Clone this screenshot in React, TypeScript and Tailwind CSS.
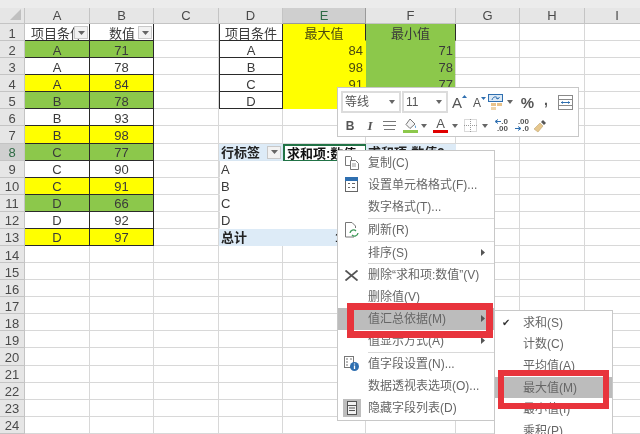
const BLACK = "border-[#2a2a2a]";
const colHeads = ["", "A", "B", "C", "D", "E", "F", "G", "H", "I"];
const source: [string, string, string][] = [
  ["A", "71", "g"], ["A", "78", "w"], ["A", "84", "y"], ["B", "78", "g"], ["B", "93", "w"], ["B", "98", "y"],
  ["C", "77", "g"], ["C", "90", "w"], ["C", "91", "y"], ["D", "66", "g"], ["D", "92", "w"], ["D", "97", "y"],
];

function FilterBtn() {
  return (
    <span className="absolute right-[1px] top-[2px] flex h-[13px] w-[14px] items-center justify-center border border-[#c8c8c8] bg-[#f2f2f2]">
      <svg width="7" height="4" viewBox="0 0 7 4"><path d="M0 0h7L3.5 4z" fill="#666" /></svg>
    </span>
  );
}

function Cell({ cls = "", children }: { cls?: string; children?: React.ReactNode }) {
  return (
    <div className={`relative flex items-center overflow-hidden whitespace-nowrap border-r border-b pt-[2px] text-[13px] leading-none text-[#3a3a3a] ${cls}`}>
      {children}
    </div>
  );
}

const fill = (k: string) => (k === "g" ? "bg-[#8cc84b]" : k === "y" ? "bg-[#ffff00]" : "bg-white");

function Row({ n }: { n: number }) {
  const grid = "border-[#d8d8d8] bg-white";
  const s = n >= 2 && n <= 13 ? source[n - 2] : null;
  const rh = n === 8 ? "bg-[#cfcfcf] text-[#2f6b45]" : "bg-[#e6e6e6] text-[#4a4a4a]";
  let a: React.ReactNode, b: React.ReactNode, d: React.ReactNode, e: React.ReactNode, f: React.ReactNode;
  if (n === 1) {
    a = <Cell cls={`${BLACK} bg-white justify-start pl-[6px]`}>项目条件<FilterBtn /></Cell>;
    b = <Cell cls={`${BLACK} bg-white justify-start pl-[19px]`}>数值<FilterBtn /></Cell>;
  } else if (s) {
    a = <Cell cls={`${BLACK} ${fill(s[2])} justify-center`}>{s[0]}</Cell>;
    b = <Cell cls={`${BLACK} ${fill(s[2])} justify-center`}>{s[1]}</Cell>;
  } else {
    a = <Cell cls={grid} />;
    b = <Cell cls={grid} />;
  }
  const table = [
    ["项目条件", "最大值", "最小值"], ["A", "84", "71"], ["B", "98", "78"], ["C", "91", "77"], ["D", "", ""],
  ];
  if (n <= 5) {
    const t = table[n - 1];
    d = <Cell cls={`${BLACK} border-l bg-white justify-center ${n === 1 ? "border-t-0" : ""}`}>{t[0]}</Cell>;
    e = <Cell cls={`${n === 1 ? "border-r-[#2a2a2a] justify-center" : "border-r-[#ffff00] justify-end pr-[2px]"} border-b-[#ffff00] bg-[#ffff00] text-[#4a4a10]`}>{t[1]}</Cell>;
    f = <Cell cls={`${n === 1 ? "border-r-[#2a2a2a] justify-center" : "border-r-[#d8d8d8] justify-end pr-[2px]"} border-b-[#8cc84b] bg-[#8cc84b] text-[#2f4a18]`}>{t[2]}</Cell>;
  } else if (n === 8) {
    d = <Cell cls="border-[#d8e6f2] bg-[#ddebf7] pl-[2px] font-bold text-[#222]">行标签<FilterBtn /></Cell>;
    e = <Cell cls="border-2 border-[#217346] bg-white pl-[2px] font-bold text-[#111]">求和项:数值</Cell>;
    f = <Cell cls="border-[#ddebf7] bg-[#ddebf7] pl-[2px] font-bold text-[#222]">求和项:数值2</Cell>;
  } else if (n >= 9 && n <= 12) {
    d = <Cell cls="border-white border-l-[#d8d8d8] border-l bg-white pl-[1px]">{["A", "B", "C", "D"][n - 9]}</Cell>;
    e = <Cell cls="border-white bg-white" />;
    f = <Cell cls="border-white bg-white" />;
  } else if (n === 13) {
    d = <Cell cls="border-[#ddebf7] bg-[#ddebf7] pl-[2px] font-bold text-[#222]">总计</Cell>;
    e = <Cell cls="border-[#ddebf7] bg-[#ddebf7] pl-[52px] font-bold text-[#222]">1</Cell>;
    f = <Cell cls="border-[#ddebf7] bg-[#ddebf7]" />;
  } else {
    d = <Cell cls={grid} />;
    e = <Cell cls={grid} />;
    f = <Cell cls={grid} />;
  }
  return (
    <>
      <div className={`flex items-center justify-center border-r border-b border-[#c4c4c4] pt-[2px] text-[13px] leading-none ${rh}`}>{n}</div>
      {a}
      {b}
      <Cell cls={grid} />
      {d}
      {e}
      {f}
      <Cell cls={grid} />
      <Cell cls={grid} />
      <Cell cls={grid} />
    </>
  );
}

function Caret() {
  return <svg width="6" height="4" viewBox="0 0 6 4" className="shrink-0"><path d="M0 0h6L3 4z" fill="#666" /></svg>;
}

function WrapIcon() {
  return (
    <svg width="16" height="17" viewBox="0 0 16 17">
      <rect x="0.5" y="0.5" width="14" height="7" fill="#dbe9f6" stroke="#2f6fb0" />
      <path d="M4 6 C5 2 9 2 10 5 M10 5l1.5-2M10 5 8 4" stroke="#2f6fb0" fill="none" />
      <rect x="3" y="9" width="5" height="3" fill="#e8c28a" />
      <rect x="9" y="9" width="5" height="3" fill="#e8c28a" />
      <rect x="3" y="13" width="5" height="3" fill="#eed3a8" />
    </svg>
  );
}
function MergeIcon() {
  return (
    <svg width="15" height="15" viewBox="0 0 15 15" fill="none" stroke="#8a8a8a">
      <rect x="0.5" y="0.5" width="14" height="14" />
      <path d="M0.5 4.5h14M0.5 10.5h14" />
      <path d="M3 7.5h9" stroke="#2f6fb0" />
      <path d="M3 7.5l2-1.5v3zM12 7.5l-2-1.5v3z" fill="#2f6fb0" stroke="none" />
    </svg>
  );
}
function AlignIcon() {
  return (
    <svg width="13" height="11" viewBox="0 0 13 11" stroke="#777"><path d="M0 1.5h13M0 5.5h13M1 9.5h11" /></svg>
  );
}
function FillIcon() {
  return (
    <svg width="15" height="15" viewBox="0 0 15 15">
      <path d="M7 1 12 6 7 10.5 3 6.5z" fill="#f4f4f4" stroke="#777" />
      <path d="M12 7c1 1.5 1.5 2.5 0.7 3-0.8 0-1-1.5-0.7-3z" fill="#4a90c8" />
      <rect x="0" y="12" width="15" height="3" fill="#8cc84b" />
    </svg>
  );
}
function BordersIcon() {
  return (
    <svg width="13" height="13" viewBox="0 0 13 13" fill="none" stroke="#b5b5b5" strokeDasharray="1 1">
      <rect x="0.5" y="0.5" width="12" height="12" />
      <path d="M6.5 0v13M0 6.5h13" stroke="#999" />
    </svg>
  );
}
function DecIcon({ flip }: { flip?: boolean }) {
  return (
    <span className="relative flex h-[15px] w-[14px] flex-col items-end text-[8px] font-bold leading-[7px] text-[#555]">
      <span>{flip ? ".00" : ".0"}</span>
      <span>{flip ? ".0" : ".00"}</span>
      <svg width="7" height="5" viewBox="0 0 7 5" className={`absolute left-0 ${flip ? "top-[8px]" : "top-[1px]"}`}>
        <path d={flip ? "M0 2.5h5M3 0.5l3 2-3 2" : "M7 2.5H2M4 0.5l-3 2 3 2"} stroke="#2f6fb0" fill="none" />
      </svg>
    </span>
  );
}
function BrushIcon() {
  return (
    <svg width="15" height="15" viewBox="0 0 15 15">
      <path d="M1 11 7 5l3 3-5 6z" fill="#e6c78e" stroke="#b79a60" strokeWidth="0.5" />
      <path d="M8 4l2-2 3 3-2 2z" fill="#555" />
    </svg>
  );
}
function CopyIcon() {
  return (
    <svg width="14" height="14" viewBox="0 0 14 14" fill="#fff" stroke="#777">
      <path d="M0.5 0.5h5l1 1v8h-6z" />
      <path d="M5.5 4.5h5l3 3v6h-8z" />
      <path d="M7 8h4M7 10h4" stroke="#999" />
    </svg>
  );
}
function FormatIcon() {
  return (
    <svg width="13" height="15" viewBox="0 0 13 15" fill="#fff" stroke="#666">
      <rect x="0.5" y="0.5" width="12" height="14" />
      <rect x="0.5" y="0.5" width="12" height="3" fill="#2f6fb0" stroke="#2f6fb0" />
      <path d="M3 6.5h2M7 6.5h3M3 10.5h2M7 10.5h3" />
    </svg>
  );
}
function RefreshIcon() {
  return (
    <svg width="14" height="16" viewBox="0 0 14 16" fill="none">
      <path d="M9 15H0.5V0.5H7l3.5 3.5v2" stroke="#777" />
      <path d="M5 11a3.5 3.5 0 0 1 6-2M13 11a3.5 3.5 0 0 1-6 2" stroke="#3f9a5a" strokeWidth="1.3" />
    </svg>
  );
}
function DeleteIcon() {
  return (
    <svg width="13" height="11" viewBox="0 0 13 11" stroke="#555" strokeWidth="1.8"><path d="M0.5 0.5 12.5 10.5M12.5 0.5 0.5 10.5" /></svg>
  );
}
function FieldIcon() {
  return (
    <svg width="15" height="15" viewBox="0 0 15 15">
      <rect x="0.5" y="0.5" width="9" height="11" fill="#fff" stroke="#777" />
      <path d="M2 3h2M6 3h2M2 6h2M2 9h2" stroke="#777" />
      <circle cx="10.5" cy="10.5" r="4.5" fill="#2f6fb0" />
      <path d="M10.5 9.5v3.5M10.5 7.5v1" stroke="#fff" strokeWidth="1.3" />
    </svg>
  );
}
function ListIcon() {
  return (
    <span className="flex h-[18px] w-[18px] items-center justify-center bg-[#bdbdbd]">
      <svg width="10" height="14" viewBox="0 0 10 14" fill="#f2f2f2" stroke="#555">
        <rect x="0.5" y="0.5" width="9" height="13" />
        <path d="M0.5 4.5h9M2 7h6M2 9.5h6" />
      </svg>
    </span>
  );
}
function Arrow() {
  return <svg width="4" height="7" viewBox="0 0 4 7" className="absolute right-[9px] top-[7px]"><path d="M0 0l4 3.5L0 7z" fill="#555" /></svg>;
}

function Sep() {
  return <div className="ml-[30px] h-px shrink-0 bg-[#d9d9d9]" />;
}

function MenuItem({ icon, label, arrow, cls = "" }: { icon?: React.ReactNode; label: string; arrow?: boolean; cls?: string }) {
  return (
    <div className={`relative flex h-[21.9px] shrink-0 items-center ${cls}`}>
      <span className="flex w-[30px] shrink-0 items-center justify-center pr-[3px]">{icon}</span>
      <span className="whitespace-nowrap text-[12px] leading-none text-[#666]">{label}</span>
      {arrow && <Arrow />}
    </div>
  );
}

function SubItem({ label, check, cls = "" }: { label: string; check?: boolean; cls?: string }) {
  return (
    <div className={`flex h-[21.6px] shrink-0 items-center ${cls}`}>
      <span className="mr-[7px] flex w-[21px] shrink-0 items-center justify-center text-[10px] leading-none text-[#333]">{check ? "✔" : ""}</span>
      <span className="whitespace-nowrap text-[12px] leading-none text-[#666]">{label}</span>
    </div>
  );
}

export default function App() {
  return (
    <div className="relative h-[434px] w-[640px] overflow-hidden bg-white blur-[0.4px] [font-family:'Liberation_Sans','Noto_Sans_CJK_SC',sans-serif]">
      <div className="h-2 bg-[#ececec]" />
      <div className="grid grid-cols-[25px_65px_64px_65px_64px_83px_90px_64px_65px_65px] grid-rows-[16px_repeat(24,17.08px)]">
        {colHeads.map((h, i) => (
          <div
            key={i}
            className={`relative flex items-center justify-center border-r border-b text-[13px] leading-none ${i === 5 ? "border-[#9a9a9a] bg-[#cfcfcf] text-[#2f6b45]" : "border-[#c4c4c4] bg-[#e6e6e6] text-[#4a4a4a]"}`}
          >
            {i === 0 && <svg width="11" height="11" viewBox="0 0 11 11" className="absolute bottom-[3px] right-[3px]"><path d="M11 0v11H0z" fill="#c0c0c0" /></svg>}
            {h}
          </div>
        ))}
        {Array.from({ length: 24 }, (_, i) => <Row key={i} n={i + 1} />)}
      </div>

      {/* mini toolbar */}
      <div className="absolute left-[337px] top-[87px] flex h-[50px] w-[242px] flex-col gap-[2px] border border-[#c8c8c8] bg-white px-[3px] pt-[3px] text-[#555]">
        <div className="flex h-[22px] items-center">
          <div className="flex h-[22px] w-[60px] items-center justify-between border-2 border-[#dcdcdc] pl-[2px] pr-[4px] text-[12px] leading-none text-[#555]">等线<Caret /></div>
          <div className="ml-px flex h-[22px] w-[46px] items-center justify-between border-2 border-[#dcdcdc] pl-[2px] pr-[4px] text-[12px] leading-none text-[#555]">11<Caret /></div>
          <div className="ml-[4px] flex w-[16px] items-start text-[15px] leading-none text-[#555]">A<svg width="5" height="3" viewBox="0 0 5 3"><path d="M0 3 2.5 0 5 3z" fill="#2f6fb0" /></svg></div>
          <div className="ml-[5px] flex w-[15px] items-start pt-[2px] text-[12px] leading-none text-[#555]">A<svg width="5" height="3" viewBox="0 0 5 3"><path d="M0 0h5L2.5 3z" fill="#2f6fb0" /></svg></div>
          <WrapIcon />
          <span className="ml-[3px]"><Caret /></span>
          <span className="ml-[7px] w-[15px] text-center text-[15px] font-bold leading-none text-[#555]">%</span>
          <span className="ml-[5px] w-[12px] pb-[5px] text-center text-[14px] font-bold leading-none text-[#555]">,</span>
          <span className="ml-[6px]"><MergeIcon /></span>
        </div>
        <div className="flex h-[21px] items-center">
          <span className="ml-[3px] w-[12px] text-center text-[12px] font-bold leading-none text-[#555]">B</span>
          <span className="ml-[8px] w-[12px] text-center text-[13px] font-bold italic leading-none text-[#555] [font-family:'Liberation_Serif',serif]">I</span>
          <span className="ml-[7px]"><AlignIcon /></span>
          <span className="ml-[7px]"><FillIcon /></span>
          <span className="ml-[3px]"><Caret /></span>
          <span className="ml-[6px] flex h-[15px] w-[15px] flex-col items-center border-b-[3px] border-[#e00000] text-[13px] leading-[12px] text-[#555]">A</span>
          <span className="ml-[4px]"><Caret /></span>
          <span className="ml-[6px]"><BordersIcon /></span>
          <span className="ml-[5px]"><Caret /></span>
          <span className="ml-[6px]"><DecIcon /></span>
          <span className="ml-[7px]"><DecIcon flip /></span>
          <span className="ml-[4px]"><BrushIcon /></span>
        </div>
      </div>

      {/* context menu */}
      <div className="absolute left-[337px] top-[150px] flex h-[271px] w-[158px] flex-col border border-[#c8c8c8] bg-white pt-[1px]">
        <MenuItem icon={<CopyIcon />} label="复制(C)" />
        <MenuItem icon={<FormatIcon />} label="设置单元格格式(F)..." />
        <MenuItem label="数字格式(T)..." />
        <Sep />
        <MenuItem icon={<RefreshIcon />} label="刷新(R)" />
        <Sep />
        <MenuItem label="排序(S)" arrow />
        <Sep />
        <MenuItem icon={<DeleteIcon />} label="删除“求和项:数值”(V)" />
        <MenuItem label="删除值(V)" />
        <MenuItem label="值汇总依据(M)" arrow cls="bg-[#bcbcbc]" />
        <MenuItem label="值显示方式(A)" arrow />
        <Sep />
        <MenuItem icon={<FieldIcon />} label="值字段设置(N)..." />
        <MenuItem label="数据透视表选项(O)..." />
        <MenuItem icon={<ListIcon />} label="隐藏字段列表(D)" />
      </div>

      {/* submenu */}
      <div className="absolute left-[494px] top-[310px] flex h-[130px] w-[119px] flex-col border border-[#c8c8c8] bg-white pt-[1px]">
        <SubItem label="求和(S)" check />
        <SubItem label="计数(C)" />
        <SubItem label="平均值(A)" />
        <SubItem label="最大值(M)" cls="bg-[#bcbcbc]" />
        <SubItem label="最小值(I)" />
        <SubItem label="乘积(P)" />
      </div>

      {/* red annotation frames */}
      <div className="pointer-events-none absolute left-[347px] top-[303px] h-[35px] w-[146px] border-[7px] border-[#e8343c]" />
      <div className="pointer-events-none absolute left-[498px] top-[370px] h-[39px] w-[111px] border-[6px] border-[#e8343c]" />
    </div>
  );
}
